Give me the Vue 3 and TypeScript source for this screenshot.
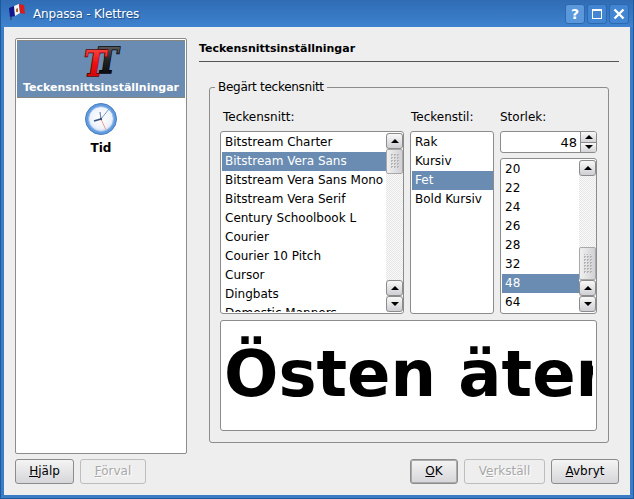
<script setup lang="ts">
const fonts = ['Bitstream Charter', 'Bitstream Vera Sans', 'Bitstream Vera Sans Mono', 'Bitstream Vera Serif', 'Century Schoolbook L', 'Courier', 'Courier 10 Pitch', 'Cursor', 'Dingbats', 'Domestic Manners']
const styles = ['Rak', 'Kursiv', 'Fet', 'Bold Kursiv']
const sizes = ['20', '22', '24', '26', '28', '32', '48', '64']
</script>

<template>
  <div class="window">
    <div class="titlebar">
      <svg class="flag" width="18" height="18" viewBox="0 0 18 18">
        <path d="M1 5 L6 3 L7 13 L2 14 Z" fill="#14148c" />
        <path d="M6 3 L11 1 L12 10 L7 13 Z" fill="#f4f4f4" />
        <path d="M11 1 L16 2 L17 11 L12 10 Z" fill="#d81c1c" />
        <path d="M8 6 L10 5 L10 9 L8 9 Z" fill="#a86a30" />
        <path d="M3 14 L3 17" stroke="#333" stroke-width="1" />
      </svg>
      <span class="title">Anpassa - Klettres</span>
      <div class="winbtns">
        <div class="winbtn help">?</div>
        <div class="winbtn">
          <svg width="12" height="12" viewBox="0 0 12 12"><rect x="1.5" y="1.5" width="9" height="9" fill="none" stroke="#fff" /><path d="M1 2h10" stroke="#fff" stroke-width="2" /></svg>
        </div>
        <div class="winbtn">
          <svg width="12" height="12" viewBox="0 0 12 12"><path d="M1.5 1.5 L10.5 10.5 M10.5 1.5 L1.5 10.5" stroke="#fff" stroke-width="2.4" /></svg>
        </div>
      </div>
    </div>

    <div class="body">
      <div class="main">
        <div class="sidebar">
          <div class="navitem active">
            <svg class="tticon" width="34" height="32" viewBox="0 0 34 32">
              <defs>
                <linearGradient id="ttred" x1="0" y1="0" x2="0" y2="1">
                  <stop offset="0" stop-color="#ff5a5a" />
                  <stop offset="0.5" stop-color="#ee1010" />
                  <stop offset="1" stop-color="#c00000" />
                </linearGradient>
                <linearGradient id="ttblack" x1="0" y1="0" x2="0" y2="1">
                  <stop offset="0" stop-color="#777" />
                  <stop offset="0.5" stop-color="#222" />
                  <stop offset="1" stop-color="#000" />
                </linearGradient>
              </defs>
              <text x="15" y="27" transform="scale(0.82 1)" class="tt black">T</text>
              <text x="0" y="30" transform="scale(0.82 1)" class="tt red">T</text>
            </svg>
            <span class="longlabel">Teckensnittsinställningar</span>
          </div>
          <div class="navitem">
            <svg width="34" height="34" viewBox="0 0 34 34">
              <defs>
                <radialGradient id="face" cx="0.5" cy="0.45" r="0.6">
                  <stop offset="0" stop-color="#ffffff" />
                  <stop offset="0.7" stop-color="#eef3fb" />
                  <stop offset="1" stop-color="#b9d0ee" />
                </radialGradient>
              </defs>
              <circle cx="17" cy="17" r="15.5" fill="#5f9be0" stroke="#4a7fc0" />
              <circle cx="17" cy="17" r="12.5" fill="url(#face)" stroke="#8fb6e6" />
              <path d="M17 17 L25 7" stroke="#7f9cc8" stroke-width="1" />
              <path d="M17 17 L10 19" stroke="#34507f" stroke-width="1.6" />
              <path d="M17 17 L22 28" stroke="#f0a088" stroke-width="1" />
              <path d="M17 17 L16 10" stroke="#6f88b8" stroke-width="1.2" />
              <circle cx="17" cy="17" r="1.2" fill="#34507f" />
            </svg>
            <span class="dark">Tid</span>
          </div>
        </div>

        <div class="content">
          <div class="heading">Teckensnittsinställningar</div>
          <fieldset class="group">
            <legend>Begärt teckensnitt</legend>
            <div class="columns">
              <div class="col col-font">
                <label>Teckensnitt:</label>
                <div class="list tall">
                  <div class="rows">
                    <div v-for="f in fonts" :key="f" class="row" :class="{ sel: f === 'Bitstream Vera Sans' }">{{ f }}</div>
                  </div>
                  <div class="scroll">
                    <div class="sbtn"><i class="up"></i></div>
                    <div class="track"><div class="slider start"></div></div>
                    <div class="sbtn"><i class="up"></i></div>
                    <div class="sbtn"><i class="down"></i></div>
                  </div>
                </div>
              </div>
              <div class="col col-style">
                <label>Teckenstil:</label>
                <div class="list tall">
                  <div class="rows">
                    <div v-for="s in styles" :key="s" class="row" :class="{ sel: s === 'Fet' }">{{ s }}</div>
                  </div>
                </div>
              </div>
              <div class="col col-size">
                <label>Storlek:</label>
                <div class="spin">
                  <div class="spinval">48</div>
                  <div class="spinbtns">
                    <div class="spinbtn"><i class="up"></i></div>
                    <div class="spinbtn"><i class="down"></i></div>
                  </div>
                </div>
                <div class="list short">
                  <div class="rows">
                    <div v-for="s in sizes" :key="s" class="row" :class="{ sel: s === '48' }">{{ s }}</div>
                  </div>
                  <div class="scroll">
                    <div class="sbtn"><i class="up"></i></div>
                    <div class="track end"><div class="slider"></div></div>
                    <div class="sbtn"><i class="up"></i></div>
                    <div class="sbtn"><i class="down"></i></div>
                  </div>
                </div>
              </div>
            </div>
            <div class="preview"><div class="previewtext">Östen äter</div></div>
          </fieldset>
        </div>
      </div>

      <div class="buttons">
        <button class="b-help"><u>H</u>jälp</button>
        <button class="b-default" disabled><u>F</u>örval</button>
        <div class="spacer"></div>
        <button class="b-ok"><u>O</u>K</button>
        <button class="b-apply" disabled>V<u>e</u>rkställ</button>
        <button class="b-cancel"><u>A</u>vbryt</button>
      </div>
    </div>
  </div>
</template>

<style>
html, body { margin: 0; padding: 0; }
</style>

<style scoped>
.window {
  width: 634px;
  height: 499px;
  box-sizing: border-box;
  display: flex;
  flex-direction: column;
  background: #3a7cc6;
  border: 1px solid #1c5a9e;
  border-top: 0;
  font-family: "DejaVu Sans", sans-serif;
  font-size: 12px;
  color: #000;
  overflow: hidden;
}
.titlebar {
  height: 27px;
  flex: none;
  display: flex;
  align-items: center;
  padding: 0 3px 0 7px;
  background: linear-gradient(#2f6cb4, #3f82cf);
  color: #fff;
}
.flag { margin-right: 7px; margin-top: -3px; }
.title {
  font-size: 12px;
  font-weight: 500;
  letter-spacing: -0.15px;
  text-shadow: 1px 1px 1px #1c4a80;
}
.winbtns { margin-left: auto; display: flex; gap: 2px; margin-right: 1px; margin-top: 1px; }
.winbtn {
  width: 20px;
  height: 20px;
  box-sizing: border-box;
  border: 1px solid #2e68ae;
  border-radius: 3px;
  background: #5a97db;
  display: flex;
  align-items: center;
  justify-content: center;
}
.winbtn:not(.help) { background: #4285d2; }
.help { font-weight: bold; font-size: 14px; color: #fff; }
.body {
  flex: 1;
  min-height: 0;
  margin: 0 3px 3px 3px;
  background: #eeeeee;
  display: flex;
  flex-direction: column;
  padding: 11px 11px 11px 11px;
}
.main { flex: 1; min-height: 0; display: flex; gap: 12px; }
.sidebar {
  width: 172px;
  box-sizing: border-box;
  background: #fff;
  border: 1px solid #8c8c8c;
  border-radius: 2px;
  padding: 1px;
  flex: none;
}
.navitem {
  display: flex;
  flex-direction: column;
  align-items: center;
  font-weight: bold;
  font-size: 12px;
}
.navitem.active {
  background: #6a8cb2;
  color: #fff;
  height: 58px;
  padding-top: 5px;
  box-sizing: border-box;
  border-bottom: 1px dotted #a08050;
  border-top: 1px dotted #a08050;
  margin-bottom: 4px;
}
.longlabel { font-size: 11px; margin-top: 3px; white-space: nowrap; }
.navitem .dark { margin-top: 5px; }
.tticon { overflow: visible; }
.tt {
  font-family: "DejaVu Serif", serif;
  font-weight: bold;
  font-style: italic;
  font-size: 36px;
  paint-order: stroke;
}
.tt.red { fill: url(#ttred); stroke: #5a0000; stroke-width: 1.6px; }
.tt.black { fill: url(#ttblack); stroke: #000; stroke-width: 1.6px; }
.content { flex: 1; min-width: 0; display: flex; flex-direction: column; }
.heading {
  font-weight: bold;
  font-size: 11px;
  height: 24px;
  line-height: 21px;
  border-bottom: 1px solid #555;
  box-sizing: border-box;
  flex: none;
}
.group {
  margin: 18px 10px 11px 10px;
  padding: 13px 11px 10px 10px;
  flex: 1;
  min-height: 0;
  border: 1px solid #8c8c8c;
  border-radius: 3px;
  display: flex;
  flex-direction: column;
  min-width: 0;
}
legend { padding: 0 3px; margin-left: -5px; line-height: 14px; letter-spacing: -0.28px; }
.columns { display: flex; gap: 6px; flex: none; }
.col { display: flex; flex-direction: column; }
.col label { height: 24px; line-height: 21px; display: block; flex: none; }
.col-font label { padding-left: 3px; }
.col-style label { padding-left: 1px; }
.col-font { width: 184px; }
.col-style { width: 84px; }
.col-size { width: 97px; }
.list {
  box-sizing: border-box;
  background: #fff;
  border: 1px solid #8c8c8c;
  border-radius: 3px;
  display: flex;
  overflow: hidden;
  padding: 1px 0 1px 1px;
}
.tall { height: 183px; }
.short { height: 156px; margin-top: 5px; }
.rows { flex: 1; min-width: 0; overflow: hidden; }
.row {
  height: 19px;
  line-height: 19px;
  padding-left: 3px;
  white-space: nowrap;
  overflow: hidden;
}
.row.sel { background: #6a8cb2; color: #fff; }
.scroll {
  width: 17px;
  flex: none;
  display: flex;
  flex-direction: column;
  background: repeating-conic-gradient(#e6e6e6 0 25%, #fafafa 0 50%) 0 0 / 2px 2px;
}
.sbtn {
  height: 16px;
  flex: none;
  box-sizing: border-box;
  border: 1px solid #8c8c8c;
  border-radius: 3px;
  background: linear-gradient(#f8f8f8, #cfcfd4);
  display: flex;
  align-items: center;
  justify-content: center;
}
.track { flex: 1; display: flex; flex-direction: column; }
.track.end { justify-content: flex-end; }
.slider {
  height: 33px;
  box-sizing: border-box;
  padding: 6px 3px;
  border: 1px solid #a8a8a8;
  border-radius: 2px;
  background:
    repeating-conic-gradient(#b4b4b4 0 25%, transparent 0 100%) center / 3px 3px content-box,
    linear-gradient(90deg, #f2f2f2, #cfcfd4) border-box;
}
.slider.start { height: 25px; padding: 4px 3px; }
.up, .down { display: block; width: 0; height: 0; border-left: 4px solid transparent; border-right: 4px solid transparent; }
.up { border-bottom: 4px solid #000; }
.down { border-top: 4px solid #000; }
.spin {
  height: 22px;
  box-sizing: border-box;
  display: flex;
  background: #fff;
  border: 1px solid #8c8c8c;
  border-radius: 3px;
  overflow: hidden;
}
.spinval { flex: 1; text-align: right; padding-right: 3px; line-height: 21px; font-size: 13px; }
.spinbtns { width: 16px; flex: none; display: flex; flex-direction: column; }
.spinbtn {
  flex: 1;
  border-left: 1px solid #8c8c8c;
  background: linear-gradient(#f8f8f8, #d4d4d8);
  display: flex;
  align-items: center;
  justify-content: center;
}
.spinbtn + .spinbtn { border-top: 1px solid #8c8c8c; }
.preview {
  margin-top: 6px;
  height: 111px;
  box-sizing: border-box;
  background: #fff;
  border: 1px solid #8c8c8c;
  border-radius: 3px;
  padding: 0 3px 0 3px;
  flex: none;
}
.previewtext {
  font-size: 64px;
  font-weight: bold;
  white-space: nowrap;
  overflow: hidden;
  line-height: 107px;
}
.buttons { display: flex; gap: 6px; flex: none; height: 25px; margin-top: 5px; }
.spacer { flex: 1; }
button {
  height: 25px;
  box-sizing: border-box;
  padding: 0 0 1px;
  border: 1px solid #8c8c8c;
  border-radius: 3px;
  background: linear-gradient(#f4f4f4, #d6d6da);
  font: inherit;
  color: #000;
}
button:disabled {
  background: #eeeeee;
  border-color: #bdbdbd;
  color: #a8a8a8;
  text-shadow: 1px 1px 0 #fff;
}
.b-help { width: 59px; }
.b-default { width: 66px; }
.b-ok { width: 48px; box-shadow: 0 0 0 1px #aaa inset; }
.b-apply { width: 81px; }
.b-cancel { width: 68px; }
</style>
